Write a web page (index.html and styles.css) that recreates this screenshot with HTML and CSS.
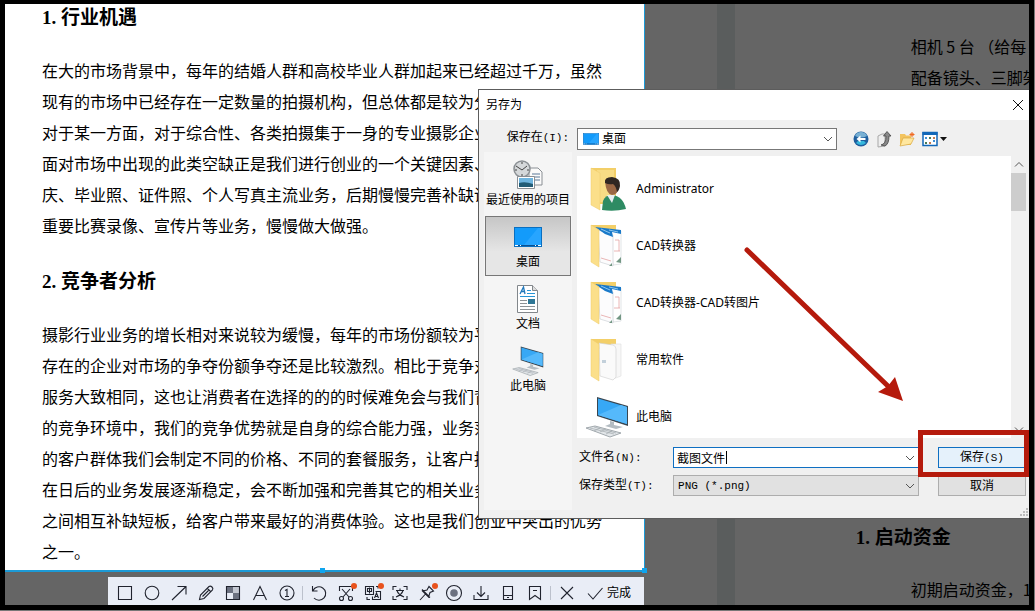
FILE: index.html
```
<!DOCTYPE html>
<html lang="zh-CN">
<head>
  <meta charset="UTF-8">
  <title>另存为</title>
  <meta name="viewport" content="width=device-width, initial-scale=1.0">
  <link rel="stylesheet" href="styles.css">
</head>
<body>

  <svg class="defs" aria-hidden="true">
    <symbol id="chevron" viewBox="0 0 10 10"><path d="M1 3l4 4 4-4" fill="none" stroke="#555"/></symbol>
    <symbol id="desktop" viewBox="0 0 28 20">
      <rect x=".5" y=".5" width="27" height="19" fill="#139bfb" stroke="#0a6fc0"/>
      <path d="M10 18L24 1h3v17z" fill="#27a5ff"/>
      <path d="M1 18.5h26" stroke="#0a4f90"/>
      <path d="M1 18.5h3M24 18.5h3M6 18.5h1M21 18.5h1" stroke="#fff"/>
    </symbol>
    <symbol id="pc" viewBox="0 0 44 42">
      <path d="M12 1l31 9v20L12 20z" fill="#3a4650"/>
      <path d="M13 2.500l29 8.500v17L13 19z" fill="#37a8f5"/>
      <path d="M13 19L36 9l6 2v17z" fill="#55b9fb"/>
      <path d="M25 25l4 1v3l9 2-7 2-11-3 5-2z" fill="#b4bcc2"/>
      <path d="M1 32l9-2 26 7-11 4z" fill="#e2e6e9" stroke="#a2a9ae"/>
      <path d="M5 32l24 6M9 31l22 6M9 35l6-3M15 36l6-3M21 38l6-3" stroke="#a2a9ae" fill="none" stroke-width=".7"/>
    </symbol>
    <symbol id="folder" viewBox="0 0 44 44">
      <path d="M6 1h25v36H12z" fill="#f3cf68"/>
      <path d="M12 3h17v32H12z" fill="#f8dc85"/>
      <path d="M6 1l9 5v37l-9-5z" fill="#fbdf8a" stroke="#efcb6b" stroke-width=".5"/>
    </symbol>
    <symbol id="folder-cad" viewBox="0 0 44 44">
      <path d="M6 1h25v10H12z" fill="#f3cf68"/>
      <path d="M25 7h11v33l-8 1z" fill="#fff" stroke="#cfd3d6" stroke-width=".6"/>
      <path d="M13 6l15 5v31l-13-4z" fill="#fcfcfd" stroke="#c6cbd0" stroke-width=".6"/>
      <path d="M10 3l26 3v4l-9-2 1 5-8-3z" fill="#1979c9"/>
      <path d="M16 5l9 4M24 6l9 2" stroke="#8ec6ee"/>
      <path d="M29 27h6M16 34l10 3M30 16h4v11" stroke="#e5a3a3" fill="none" stroke-width=".8"/>
      <path d="M31 38l5-5v6zM24 42l3-3v3z" fill="#739784"/>
      <path d="M6 1l8 5v37l-8-5z" fill="#fbdf8a" stroke="#efcb6b" stroke-width=".5"/>
    </symbol>
  </svg>

  <div class="screen">
    <div class="capture">
      <article class="doc">
        <h2>1. 行业机遇</h2>
        <p>
          在大的市场背景中，每年的结婚人群和高校毕业人群加起来已经超过千万，虽然<br>
          现有的市场中已经存在一定数量的拍摄机构，但总体都是较为分<br>
          对于某一方面，对于综合性、各类拍摄集于一身的专业摄影企业<br>
          面对市场中出现的此类空缺正是我们进行创业的一个关键因素、<br>
          庆、毕业照、证件照、个人写真主流业务，后期慢慢完善补缺诸<br>
          重要比赛录像、宣传片等业务，慢慢做大做强。
        </p>
        <h2>2. 竞争者分析</h2>
        <p>
          摄影行业业务的增长相对来说较为缓慢，每年的市场份额较为平<br>
          存在的企业对市场的争夺份额争夺还是比较激烈。相比于竞争对<br>
          服务大致相同，这也让消费者在选择的的的时候难免会与我们背<br>
          的竞争环境中，我们的竞争优势就是自身的综合能力强，业务范<br>
          的客户群体我们会制定不同的价格、不同的套餐服务，让客户拥<br>
          在日后的业务发展逐渐稳定，会不断加强和完善其它的相关业务<br>
          之间相互补缺短板，给客户带来最好的消费体验。这也是我们创业中突出的优势<br>
          之一。
        </p>
        <i class="handle handle-mid"></i>
        <i class="handle handle-corner"></i>
      </article>

      <div class="toolbar">
        <button aria-label="矩形"><svg viewBox="0 0 18 18"><path d="M2.500 2.500h13v13h-13z"/></svg></button>
        <button aria-label="椭圆"><svg viewBox="0 0 18 18"><circle cx="9" cy="9" r="6.800"/></svg></button>
        <button aria-label="箭头"><svg viewBox="0 0 18 18"><path d="M2 16L15.500 3M7.500 2.500h8.500v8"/></svg></button>
        <button aria-label="画笔"><svg viewBox="0 0 18 18"><path d="M2.500 15.500l1-4.500L12 2.500q1.500-1 3 .5t.5 3L7 14.500zM10.500 4.500l3 3M5.500 12.500l6-6"/></svg></button>
        <button aria-label="马赛克"><svg viewBox="0 0 18 18"><path d="M3 3h6v6H3zM9 9h6v6H9z" fill="#6c7180" stroke="none"/><path d="M9 3h6v6H9z" fill="#c3c7d1" stroke="none"/><path d="M2.500 2.500h13v13h-13z"/></svg></button>
        <button aria-label="文字"><svg viewBox="0 0 18 18"><path d="M2.500 16L9 2.500 15.500 16M5 11.500h8"/></svg></button>
        <button aria-label="序号"><svg viewBox="0 0 18 18"><circle cx="9" cy="9" r="7"/><path d="M7 6.500l2-1v7M7 12.500h4"/></svg></button>
        <span class="sep"></span>
        <button aria-label="撤销"><svg viewBox="0 0 18 18"><path d="M2.500 2v5h5M3 6.500a6.700 6.700 0 1 1 1 7.500"/></svg></button>
        <button class="new" aria-label="裁剪"><svg viewBox="0 0 18 18"><path d="M2.500 7V2.500h13V7M5 5l7 8M13 5l-7 8"/><circle cx="4.500" cy="14.500" r="2"/><circle cx="13.500" cy="14.500" r="2"/></svg></button>
        <button class="new" aria-label="翻译"><svg viewBox="0 0 18 18"><path d="M1.500 2.500h8v8h-8zM3.500 4.500h4v3h-4zM5.500 3.500v6M11.500 7.500h5v8h-8v-3M10.500 14l2-5 2 5M11 12.500h3M3 13v2.500h3M12 2.500h2v2"/></svg></button>
        <button aria-label="文字识别"><svg viewBox="0 0 18 18"><path d="M2 6V2.500h3.500M12.500 2.500H16V6M16 12v3.500h-3.500M5.500 15.500H2V12M5 6.500h8M9 4.500v2M6 6.500q1 4 7 6.500M12 6.500q-1 4-7 6.500"/></svg></button>
        <button class="new" aria-label="固定"><svg viewBox="0 0 18 18"><path d="M11 2.500L15.500 7l-3.500 1.500-1.500 4.500-6-6L9 6zM2 16l5.500-6M4 5.500l8 8"/></svg></button>
        <button aria-label="录屏"><svg viewBox="0 0 18 18"><circle cx="9" cy="9" r="7.500"/><circle cx="9" cy="9" r="3.800" fill="#6c7180" stroke="none"/></svg></button>
        <button aria-label="保存"><svg viewBox="0 0 18 18"><path d="M9 2v10M5 8.500L9 12.500l4-4M2 11v4.500h14V11"/></svg></button>
        <button aria-label="发送到手机"><svg viewBox="0 0 18 18"><path d="M4.500 2.500h9v13h-9zM4.500 11.500h9M8 13.500h2"/></svg></button>
        <button aria-label="收藏"><svg viewBox="0 0 18 18"><path d="M3.500 2.500h11v13L9 11.500l-5.500 4zM7 6.500h4"/></svg></button>
        <span class="sep"></span>
        <button aria-label="关闭"><svg viewBox="0 0 18 18"><path d="M3 3l12 12M15 3L3 15"/></svg></button>
        <button class="done"><svg viewBox="0 0 18 18"><path d="M2 9.500L7 15 16.500 4"/></svg>完成</button>
      </div>
    </div>

    <div class="gap"></div>

    <article class="next-page">
      <p>相机 5 台 （给每<br>配备镜头、三脚架</p>
      <div>
        <h2>1. 启动资金</h2>
        <p>初期启动资金，1</p>
      </div>
    </article>

    <form class="dialog" onsubmit="return false">
      <header class="title">
        <span>另存为</span>
        <button type="button" aria-label="关闭"><svg viewBox="0 0 12 12"><path d="M1 1l10 10M11 1L1 11" stroke="#111" fill="none"/></svg></button>
      </header>

      <div class="body">
        <div class="side">
          <label for="look-in">保存在<span class="mono">(I):</span></label>
          <nav class="places">
            <button type="button">
              <svg viewBox="0 0 32 32">
                <path d="M17 9h9l4 4v13H17z" fill="#fafafa" stroke="#8a8f94"/>
                <path d="M20 15h8M20 18h8M20 21h8" stroke="#5a7898"/>
                <circle cx="10" cy="10" r="8" fill="#d5d8da" stroke="#8b9094" stroke-width="1.500"/>
                <path d="M4 7l6 4 5-4M10 3v2M10 15v2M3 11h2M15 11h2" stroke="#444" fill="none"/>
                <path d="M5.500 17.500h17v12h-17z" fill="#fff" stroke="#8a8f94"/>
                <path d="M7 19h14v9H7z" fill="#6fb5df"/>
                <path d="M7 24q6-2 14 1v3H7z" fill="#225c76"/>
              </svg>
              最近使用的项目
            </button>
            <button type="button" class="active"><svg viewBox="0 0 32 32"><use href="#desktop" x="2" y="5" width="28" height="22"/></svg>桌面</button>
            <button type="button">
              <svg viewBox="0 0 32 32">
                <path d="M5.500 2.500h15l5 5v22h-20z" fill="#fff" stroke="#82878b"/>
                <path d="M20.500 2.500v5h5" fill="#ddd" stroke="#82878b"/>
                <path d="M8 11l3.500-7 1.500 7M9 8.500h4" stroke="#2279bc" fill="none" stroke-width="1.300"/>
                <path d="M15 7.500h4M15 10.500h8M8 13.500h15" stroke="#2795d6"/>
                <path d="M8 17.500h7M8 20.500h7M8 23.500h15M8 26.500h15" stroke="#8d9296"/>
                <path d="M16 16h7v5h-7z" fill="#2f7796"/>
              </svg>
              文档
            </button>
            <button type="button"><svg viewBox="0 0 32 32"><use href="#pc" width="32" height="32"/></svg>此电脑</button>
          </nav>
        </div>

        <div class="main">
          <div class="look-row">
            <div class="combo look">
              <svg class="lead"><use href="#desktop"/></svg>
              <select id="look-in"><option>桌面</option></select>
              <svg class="chev"><use href="#chevron"/></svg>
            </div>
            <div class="nav-tools">
              <button type="button" aria-label="后退"><svg viewBox="0 0 18 18"><circle cx="9" cy="9" r="7.500" fill="#1f5f9e"/><path d="M3 6a6.500 6.500 0 0 1 12 0q-6 3-12 0z" fill="#78b0d4"/><path d="M4 13q5 4 10 0l-2-2H6z" fill="#35b8dd"/><path d="M4.500 9l4-3.500V8h5v2h-5v2.500z" fill="#fff"/></svg></button>
              <button type="button" aria-label="向上"><svg viewBox="0 0 18 18"><path d="M3 6l4-2h3v12l-7 1z" fill="#eee" stroke="#a8a8a8"/><path d="M6 15q5-1 5-9H8.500L12 1.500 16 6h-2q0 8-4 10z" fill="#888" stroke="#444" stroke-width=".8"/></svg></button>
              <button type="button" aria-label="新建文件夹"><svg viewBox="0 0 18 18"><path d="M2 4h5l1 1.500h5V15H2z" fill="#f3c45f"/><path d="M2 16L5 8h11l-3 6z" fill="#ffe79f" stroke="#d9a83f" stroke-width=".7"/><path d="M14 2v5M11.500 4.500h5M12.500 3l3 3M15.500 3l-3 3" stroke="#f06a22"/></svg></button>
              <button type="button" class="views" aria-label="查看"><svg viewBox="0 0 26 18"><path d="M2 2.500h14v13H2z" fill="#fff" stroke="#1267b8" stroke-width="1.500"/><path d="M1.500 2h15v3h-15z" fill="#1267b8"/><path d="M4 7h2v2H4zM12 10h2v2h-2z" fill="#3f8fd5"/><path d="M8 7h2v2H8zM4 12h2v2H4z" fill="#477b56"/><path d="M12 7h2v2h-2zM8 12h2v2H8z" fill="#c37b52"/><path d="M19 7h7l-3.500 4z" fill="#111"/></svg></button>
            </div>
          </div>

          <div class="list">
            <ul>
              <li>
                <svg viewBox="0 0 44 44">
                  <use href="#folder"/>
                  <path d="M17 43l1-9q2-6 9-6 11 1 14 14-12 3-24 1z" fill="#2e8b63"/>
                  <path d="M22 28h8l-3 8z" fill="#e8eef0"/>
                  <path d="M20 14q0-3 7-3 8 0 7 8-1 9-7 9-6-1-7-14z" fill="#9b6845"/>
                  <path d="M20 16q-1-6 7-6 9 1 8 9-1 5-3 6-1-6-4-8-4 1-8-1z" fill="#302722"/>
                </svg>
                Administrator
              </li>
              <li><svg><use href="#folder-cad"/></svg>CAD转换器</li>
              <li><svg><use href="#folder-cad"/></svg>CAD转换器-CAD转图片</li>
              <li>
                <svg viewBox="0 0 44 44">
                  <path d="M6 1h25v10H12z" fill="#f3cf68"/>
                  <path d="M26 6h10v32l-8 3z" fill="#f7f7f7" stroke="#ddd" stroke-width=".6"/>
                  <path d="M14 5l14 2q3 1 3 4v28l-3 3-13-4z" fill="#fafafa" stroke="#cfcfcf" stroke-width=".6"/>
                  <path d="M18 22v3M20 22v3" stroke="#8ba6bb"/>
                  <path d="M6 1l8 5v37l-8-5z" fill="#fbdf8a" stroke="#efcb6b" stroke-width=".5"/>
                </svg>
                常用软件
              </li>
              <li><svg><use href="#pc"/></svg>此电脑</li>
            </ul>
            <div class="scroll">
              <svg class="up"><use href="#chevron"/></svg>
              <i></i>
              <svg class="down"><use href="#chevron"/></svg>
            </div>
          </div>

          <div class="fields">
            <label for="file-name">文件名<span class="mono">(N):</span></label>
            <div class="combo name">
              <input id="file-name" type="text" value="截图文件">
              <i class="caret"></i>
              <svg class="chev"><use href="#chevron"/></svg>
            </div>
            <button class="save">保存<span class="mono">(S)</span></button>

            <label for="file-type">保存类型<span class="mono">(T):</span></label>
            <div class="combo type">
              <select id="file-type"><option>PNG (*.png)</option></select>
              <svg class="chev"><use href="#chevron"/></svg>
            </div>
            <button type="button">取消</button>
          </div>
        </div>
      </div>

      <svg class="grip" viewBox="0 0 9 9"><path d="M6 0h2v2H6zM3 3h2v2H3zM6 3h2v2H6zM0 6h2v2H0zM3 6h2v2H3zM6 6h2v2H6z" fill="#bbb"/></svg>

      <svg class="arrow" viewBox="0 0 160 156">
        <path d="M3 3L147 142" stroke="#b51a0c" stroke-width="5" stroke-linecap="round"/>
        <path d="M159 154l-8-24-7 9-10 6z" fill="#b51a0c"/>
      </svg>
      <div class="mark"></div>
    </form>
  </div>

</body>
</html>
```
FILE: styles.css
```
* {
  box-sizing: border-box;
}

body {
  margin: 0;
  min-height: 100vh;
  padding: 0 1px 1px 0;
  display: flex;
  background: #777;
  font-family: "Noto Sans", "Noto Sans CJK SC", sans-serif;
  font-size: 12px;
  line-height: 16px;
  color: #000;
}

button, input, select {
  margin: 0;
  padding: 0;
  border: none;
  background: none;
  font: inherit;
  color: inherit;
}

select {
  appearance: none;
}

svg {
  display: block;
  flex: none;
}

.defs {
  position: absolute;
  width: 0;
  height: 0;
}

.mono {
  font-family: "Liberation Mono", monospace;
  font-size: 11px;
}

.screen {
  position: relative;
  flex: 1;
  display: grid;
  grid-template-columns: 62.5% 7% 18px 1fr;
  border: 5px solid #000;
  border-top-width: 4px;
  background: #656565;
  overflow: hidden;
}

/* document pages */
.doc {
  position: relative;
  padding: 0 0 3px 37px;
  background: #fff;
  border-right: 1px solid #1c9ad6;
  border-bottom: 2px solid #1c9ad6;
}

.doc, .next-page {
  font-family: "Noto Sans CJK SC", sans-serif;
  font-size: 16px;
  line-height: 31px;
  white-space: nowrap;
}

.doc p, .next-page p {
  margin: 0;
}

h2 {
  margin: 0;
  font-family: "Liberation Serif", "Noto Sans CJK SC", serif;
  font-size: 19px;
  font-weight: bold;
  line-height: 28px;
}

.doc h2 {
  margin-bottom: 23px;
}

.doc p + h2 {
  margin-top: 27px;
}

.handle {
  position: absolute;
  width: 5px;
  height: 5px;
  background: #10a5ee;
}

.handle-mid {
  left: 315px;
  bottom: -3px;
}

.handle-corner {
  right: -3px;
  bottom: -3px;
}

.gap {
  grid-column: 3;
  background: #5a5d5d;
}

.next-page {
  display: flex;
  flex-direction: column;
  justify-content: space-between;
  padding: 27px 0 0 121px;
}

.next-page h2 {
  margin-bottom: 22px;
}

.next-page p {
  padding-left: 55px;
}

/* capture toolbar */
.toolbar {
  display: flex;
  align-items: center;
  height: 28px;
  margin: 5px 1px 0 103px;
  padding: 4px 0 0 3px;
  background: #e9edf6;
}

.toolbar button {
  position: relative;
  width: 27px;
  display: flex;
  align-items: center;
  justify-content: center;
}

.toolbar svg {
  width: 18px;
  height: 18px;
  fill: none;
  stroke: #20232e;
  stroke-width: 1.1;
}

.toolbar .sep {
  width: 1px;
  height: 14px;
  margin: 0 2px;
  background: #bcc1cc;
}

.toolbar .done {
  width: auto;
  gap: 3px;
  padding-left: 6px;
}

.new::after {
  content: '';
  position: absolute;
  top: -1px;
  right: 2px;
  width: 6px;
  height: 6px;
  border-radius: 50%;
  background: #e8521d;
}

/* save dialog */
.dialog {
  position: absolute;
  top: 85px;
  left: 46.2%;
  right: 0;
  background: #f0f0f0;
  border: 1px solid #5c5c5c;
  border-right: none;
}

.title {
  display: flex;
  align-items: center;
  justify-content: space-between;
  height: 30px;
  padding: 0 5px 0 7px;
  background: #fff;
}

.title svg {
  width: 12px;
  height: 12px;
}

.body {
  display: flex;
}

.side {
  width: 98px;
  display: flex;
  flex-direction: column;
}

.side label {
  height: 32px;
  padding: 9px 8px 0 0;
  text-align: right;
}

.places {
  flex: 1;
  display: flex;
  flex-direction: column;
  gap: 2px;
  margin: 0 5px 8px;
  padding: 2px 1px;
  background: #f5f5f5;
}

.places button {
  height: 60px;
  padding-top: 4px;
  display: flex;
  flex-direction: column;
  align-items: center;
  gap: 1px;
  border: 1px solid transparent;
  white-space: nowrap;
}

.places .active {
  border: 1px solid #777;
  background: linear-gradient(#c6c6c6, #e6e6e6 60%);
}

.places svg {
  width: 32px;
  height: 32px;
}

.main {
  flex: 1;
  min-width: 0;
  padding: 8px 3px 22px 0;
}

.look-row {
  display: flex;
  gap: 12px;
  margin-bottom: 6px;
}

.look {
  width: 58%;
  height: 22px;
}

.combo {
  position: relative;
}

.combo input, .combo select {
  width: 100%;
  height: 100%;
  padding-left: 4px;
  border: 1px solid #777;
  border-radius: 0;
  background: #fff;
}

.look select {
  padding-left: 24px;
}

.lead {
  position: absolute;
  left: 6px;
  top: 5px;
  width: 16px;
  height: 12px;
}

.chev {
  position: absolute;
  right: 4px;
  top: 6px;
  width: 10px;
  height: 10px;
}

.nav-tools {
  display: flex;
  align-items: center;
}

.nav-tools button {
  width: 23px;
  display: flex;
  justify-content: center;
}

.nav-tools svg {
  width: 18px;
  height: 18px;
}

.nav-tools .views {
  width: 32px;
}

.nav-tools .views svg {
  width: 26px;
}

.list {
  display: flex;
  height: 282px;
  background: #fff;
  overflow: hidden;
}

.list ul {
  flex: 1;
  margin: 0;
  padding: 4px 0 0 8px;
  list-style: none;
}

.list li {
  display: flex;
  align-items: center;
  gap: 7px;
  height: 57px;
}

.list li svg {
  width: 44px;
  height: 44px;
}

.scroll {
  width: 15px;
  display: flex;
  flex-direction: column;
  align-items: center;
  background: #f0f0f0;
}

.scroll svg {
  width: 10px;
  height: 17px;
}

.scroll i {
  width: 100%;
  height: 38px;
  background: #cdcdcd;
}

.scroll .up {
  transform: rotate(180deg);
}

.scroll .down {
  margin-top: auto;
}

.fields {
  display: grid;
  grid-template-columns: 96px 1fr 88px;
  grid-auto-rows: 21px;
  row-gap: 7px;
  align-items: center;
  margin-top: 9px;
}

.fields label {
  padding-left: 2px;
}

.fields .combo {
  height: 21px;
  margin-right: 19px;
}

.fields .name input {
  padding-left: 3px;
  border-color: #0f6fc2;
}

.caret {
  position: absolute;
  left: 53px;
  top: 4px;
  width: 1px;
  height: 13px;
  background: #000;
}

.fields .type select {
  border-color: #adadad;
  background: #e1e1e1;
  font-family: "Liberation Mono", monospace;
  font-size: 11px;
}

.fields button {
  height: 21px;
  border: 1px solid #adadad;
  background: #e1e1e1;
}

.fields .save {
  border-color: #0f6fc2;
  background: #e5f1fb;
}

.grip {
  position: absolute;
  right: 0;
  bottom: 1px;
  width: 9px;
  height: 9px;
}

/* red annotations */
.arrow {
  position: absolute;
  top: 157px;
  right: 125px;
  width: 160px;
  height: 156px;
}

.mark {
  position: absolute;
  right: 0;
  bottom: 41px;
  width: 111px;
  height: 47px;
  border: 5px solid #b51a0c;
}
```
